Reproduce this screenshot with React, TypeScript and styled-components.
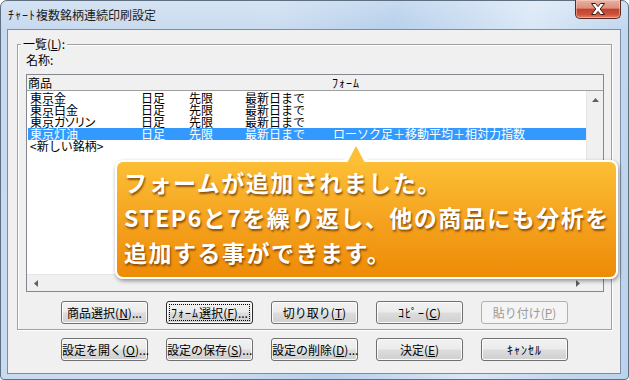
import React from "react";
import styled, { createGlobalStyle, css } from "styled-components";

const GlobalStyle = createGlobalStyle`
  html, body {
    margin: 0;
    padding: 0;
    background: #fff;
  }
  body {
    font-family: "Noto Sans CJK JP", "Noto Sans", sans-serif;
    font-size: 12px;
    color: #000;
  }
  * {
    box-sizing: border-box;
  }
`;

// window frame
const Window = styled.div`
  position: relative;
  width: 629px;
  height: 380px;
  display: flex;
  flex-direction: column;
  border: 1px solid #5f6f82;
  border-radius: 7px 7px 4px 4px;
  background: linear-gradient(
      to bottom,
      rgba(255, 255, 255, 0.22),
      rgba(255, 255, 255, 0) 28px
    ),
    linear-gradient(
      100deg,
      #c8daef 0%,
      #cbdcf0 40%,
      #b7d0ec 57%,
      #c8dbf1 67%,
      #dae7f6 77%,
      #c3d8ef 90%,
      #bcd3ed 100%
    );
`;

const TitleBar = styled.div`
  height: 28px;
  display: flex;
  align-items: flex-start;
  padding-left: 7px;
`;

const Title = styled.div`
  line-height: 28px;
  font-size: 12px;
  color: #1b1b1b;
`;

const CloseButton = styled.div`
  margin-left: auto;
  margin-right: 7px;
  margin-top: -1px;
  width: 46px;
  height: 19px;
  display: flex;
  align-items: center;
  justify-content: center;
  border: 1px solid #5a2a22;
  border-top: none;
  border-radius: 0 0 5px 5px;
  background: linear-gradient(
    to bottom,
    #e9b2a3 0%,
    #dc8e7c 45%,
    #c2412e 52%,
    #cd5339 80%,
    #e2856a 100%
  );
  box-shadow: inset 0 0 0 1px rgba(255, 220, 210, 0.45);
`;

// half-width katakana are drawn a bit wider in the original UI font
const Hw = styled.span`
  letter-spacing: 1px;
`;

const Narrow = styled.span`
  letter-spacing: -2px;
`;

const Client = styled.div`
  flex: 1;
  margin: 0 7px 5px 6px;
  border: 1px solid #7d8ea3;
  background: #f0f0f0;
  display: flex;
  flex-direction: column;
  padding: 14px 8px 0 9px;
`;

// group box
const GroupBox = styled.div`
  position: relative;
  border: 1px solid #a0a0a0;
  box-shadow: inset 1px 1px 0 #fff, 1px 1px 0 #fff;
  padding: 8px 7px 5px 8px;
`;

const Legend = styled.div`
  position: absolute;
  top: -8px;
  left: 3px;
  padding: 0 2px;
  background: #f0f0f0;
  line-height: 13px;
`;

const NameLabel = styled.div`
  line-height: 13px;
`;

// list view
const ListBox = styled.div`
  margin-top: 8px;
  height: 218px;
  border: 1px solid #828790;
  background: #fff;
  display: flex;
  flex-direction: column;
`;

const ListHeader = styled.div`
  height: 16px;
  flex: none;
  display: flex;
  padding-left: 1px;
  line-height: 15px;
  background: #f0f0f0;
  border-bottom: 1px solid #a0a0a0;
`;

const HeaderCell = styled.div<{ $w?: number }>`
  width: ${(p) => (p.$w ? `${p.$w}px` : "auto")};
  flex: ${(p) => (p.$w ? "none" : "1")};
`;

const ListBody = styled.div`
  flex: 1;
  display: flex;
  min-height: 0;
`;

const Rows = styled.div`
  flex: 1;
  padding-top: 1px;
  margin-left: 1px;
`;

const Row = styled.div<{ $selected?: boolean }>`
  display: grid;
  grid-template-columns: 111px 48px 56px 88px 1fr;
  height: 12px;
  line-height: 12px;
  padding-left: 2px;
  white-space: nowrap;
  ${(p) =>
    p.$selected &&
    css`
      background: #3399ff;
      color: #fff;
    `}
`;

const VScroll = styled.div`
  width: 17px;
  flex: none;
  background: #f0f0f0;
  border-left: 1px solid #e6e6e6;
  display: flex;
  flex-direction: column;
  justify-content: space-between;
`;

const HScroll = styled.div`
  height: 17px;
  flex: none;
  display: flex;
`;

const HTrack = styled.div`
  flex: 1;
  display: flex;
  justify-content: space-between;
  background: #f0f0f0;
  border-top: 1px solid #e6e6e6;
`;

const ScrollCorner = styled.div`
  width: 17px;
  background: #f0f0f0;
`;

const ArrowBox = styled.div`
  width: 17px;
  height: 17px;
  flex: none;
  display: flex;
  align-items: center;
  justify-content: center;
`;

// buttons
const ButtonRow = styled.div<{ $indent: number; $top: number }>`
  display: flex;
  gap: 18px;
  padding-left: ${(p) => p.$indent}px;
  margin-top: ${(p) => p.$top}px;
`;

const Button = styled.button<{ $focused?: boolean }>`
  position: relative;
  width: 87px;
  height: 23px;
  padding: 0;
  font: inherit;
  font-size: 12px;
  line-height: 21px;
  color: #000;
  white-space: nowrap;
  border: 1px solid ${(p) => (p.$focused ? "#2b2b2b" : "#707070")};
  border-radius: 3px;
  background: linear-gradient(
    to bottom,
    #f2f2f2 0%,
    #ebebeb 48%,
    #dddddd 52%,
    #cfcfcf 100%
  );
  box-shadow: inset 0 0 0 1px #fbfbfb;

  &:disabled {
    color: #9a9a9a;
    border-color: #adb2b5;
    background: #f4f4f4;
    box-shadow: none;
  }

  ${(p) =>
    p.$focused &&
    css`
      &::after {
        content: "";
        position: absolute;
        inset: 2px;
        border: 1px dotted #000;
      }
    `}
`;

// orange callout
const Callout = styled.div`
  position: absolute;
  left: 114px;
  top: 159px;
  width: 503px;
  height: 119px;
  border: 2px solid #fff;
  border-radius: 8px;
  background: linear-gradient(to bottom, #fcbf35 0%, #f5a31f 50%, #ee8b06 100%);
  box-shadow: 1px 2px 4px rgba(0, 0, 0, 0.4);
`;

const CalloutPointer = styled.svg`
  position: absolute;
  left: 226px;
  top: -20px;
`;

const CalloutText = styled.div`
  padding: 3px 0 0 7px;
  font-size: 23px;
  font-weight: 700;
  line-height: 35px;
  letter-spacing: 1.5px;
  color: #fff;
  white-space: nowrap;
  text-shadow: 1px 2px 2px rgba(105, 50, 0, 0.75);
`;

type RowData = {
  name: React.ReactNode;
  a: string;
  b: string;
  c: string;
  form: string;
  selected?: boolean;
};

const rows: RowData[] = [
  { name: "東京金", a: "日足", b: "先限", c: "最新日まで", form: "" },
  { name: "東京白金", a: "日足", b: "先限", c: "最新日まで", form: "" },
  {
    name: (
      <>
        東京<Narrow>ガソリン</Narrow>
      </>
    ),
    a: "日足",
    b: "先限",
    c: "最新日まで",
    form: "",
  },
  {
    name: "東京灯油",
    a: "日足",
    b: "先限",
    c: "最新日まで",
    form: "ローソク足＋移動平均＋相対力指数",
    selected: true,
  },
  { name: "<新しい銘柄>", a: "", b: "", c: "", form: "" },
];

const Arrow = ({ dir }: { dir: "up" | "down" | "left" | "right" }) => {
  const pts = {
    up: "0,4 3.5,0 7,4",
    down: "0,0 3.5,4 7,0",
    left: "4,0 0,3.5 4,7",
    right: "0,0 4,3.5 0,7",
  }[dir];
  const vertical = dir === "up" || dir === "down";
  return (
    <svg width={vertical ? 7 : 4} height={vertical ? 4 : 7}>
      <polygon points={pts} fill="#606060" />
    </svg>
  );
};

const Mn = ({ label, k, tail = "" }: { label: React.ReactNode; k: string; tail?: string }) => (
  <>
    {label}(<u>{k}</u>){tail}
  </>
);

export default function App() {
  return (
    <>
      <GlobalStyle />
      <Window>
        <TitleBar>
          <Title>
            <Hw>ﾁｬｰﾄ</Hw>複数銘柄連続印刷設定
          </Title>
          <CloseButton>
            <svg width="14" height="12" viewBox="0 0 14 12">
              <path
                d="M0.5 0.5 H4.5 L7 3.6 L9.5 0.5 H13.5 L9.2 6 L13.5 11.5 H9.5 L7 8.4 L4.5 11.5 H0.5 L4.8 6 Z"
                fill="#fff"
                stroke="#3d1a14"
                strokeWidth="1"
                strokeLinejoin="round"
              />
            </svg>
          </CloseButton>
        </TitleBar>

        <Client>
          <GroupBox>
            <Legend>
              一覧(<u>L</u>):
            </Legend>
            <NameLabel>名称:</NameLabel>
            <ListBox>
              <ListHeader>
                <HeaderCell $w={304}>商品</HeaderCell>
                <HeaderCell>
                  <Hw>ﾌｫｰﾑ</Hw>
                </HeaderCell>
              </ListHeader>
              <ListBody>
                <Rows>
                  {rows.map((r, i) => (
                    <Row key={i} $selected={r.selected}>
                      <span>{r.name}</span>
                      <span>{r.a}</span>
                      <span>{r.b}</span>
                      <span>{r.c}</span>
                      <span>{r.form}</span>
                    </Row>
                  ))}
                </Rows>
                <VScroll>
                  <ArrowBox>
                    <Arrow dir="up" />
                  </ArrowBox>
                  <ArrowBox>
                    <Arrow dir="down" />
                  </ArrowBox>
                </VScroll>
              </ListBody>
              <HScroll>
                <HTrack>
                  <ArrowBox>
                    <Arrow dir="left" />
                  </ArrowBox>
                  <ArrowBox>
                    <Arrow dir="right" />
                  </ArrowBox>
                </HTrack>
                <ScrollCorner />
              </HScroll>
            </ListBox>

            <ButtonRow $indent={35} $top={9}>
              <Button>
                <Mn label="商品選択" k="N" tail="..." />
              </Button>
              <Button $focused>
                <Mn
                  label={
                    <>
                      <Hw>ﾌｫｰﾑ</Hw>選択
                    </>
                  }
                  k="F"
                  tail="..."
                />
              </Button>
              <Button>
                <Mn label="切り取り" k="T" />
              </Button>
              <Button>
                <Mn label={<Hw>ｺﾋﾟｰ</Hw>} k="C" />
              </Button>
              <Button disabled>
                <Mn label="貼り付け" k="P" />
              </Button>
            </ButtonRow>
          </GroupBox>

          <ButtonRow $indent={44} $top={8}>
            <Button>
              <Mn label="設定を開く" k="O" tail="..." />
            </Button>
            <Button>
              <Mn label="設定の保存" k="S" tail="..." />
            </Button>
            <Button>
              <Mn label="設定の削除" k="D" tail="..." />
            </Button>
            <Button>
              <Mn label="決定" k="E" />
            </Button>
            <Button>
              <Hw>ｷｬﾝｾﾙ</Hw>
            </Button>
          </ButtonRow>
        </Client>

        <Callout>
          <CalloutPointer width="26" height="23" viewBox="0 0 26 23">
            <polygon points="0,19 13,0 26,19" fill="#fff" />
            <polygon points="3,23 13,4 23,23" fill="#fcbf35" />
          </CalloutPointer>
          <CalloutText>
            <div>フォームが追加されました。</div>
            <div>STEP6と7を繰り返し、他の商品にも分析を</div>
            <div>追加する事ができます。</div>
          </CalloutText>
        </Callout>
      </Window>
    </>
  );
}
